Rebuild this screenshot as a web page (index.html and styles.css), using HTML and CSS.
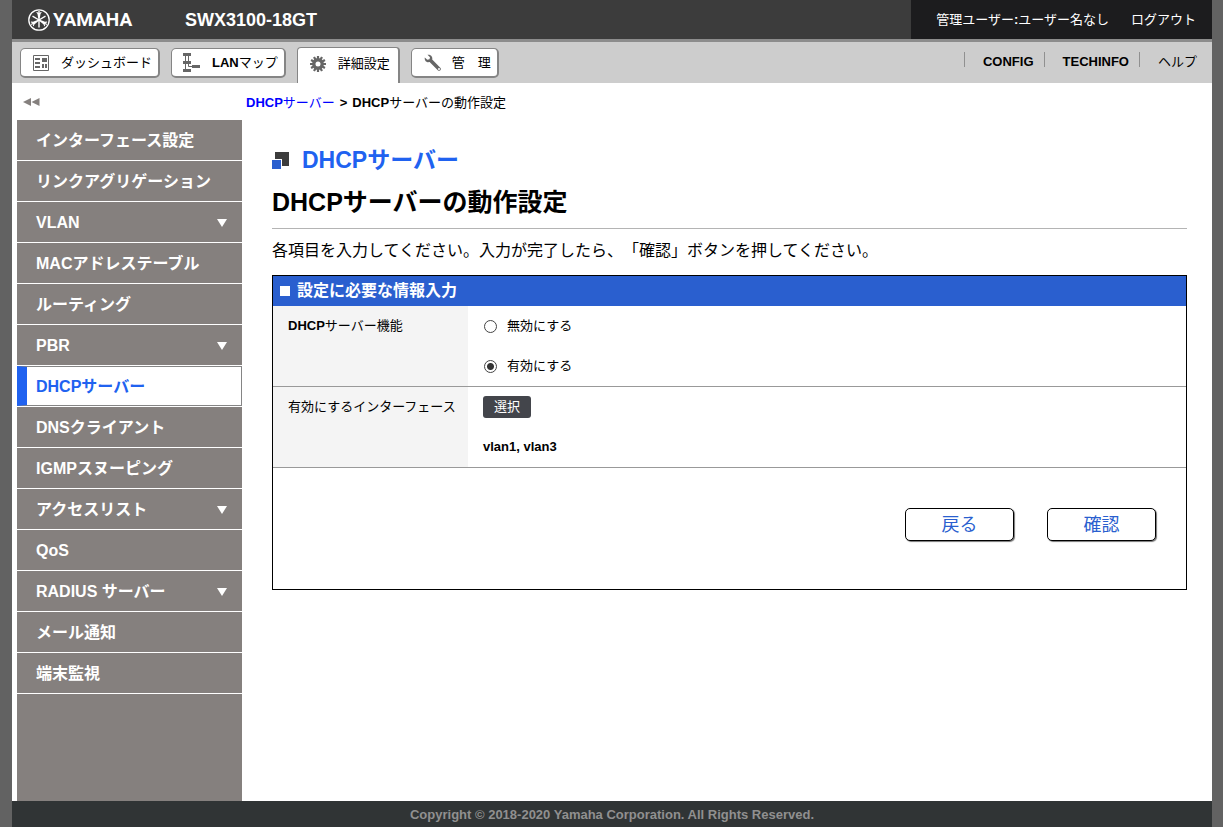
FILE: index.html
```html
<!DOCTYPE html>
<html lang="ja">
<head>
<meta charset="utf-8">
<title>SWX3100-18GT - DHCPサーバー</title>
<link rel="stylesheet" href="styles.css">
</head>
<body>
<div class="page">
  <header class="header">
    <div class="brand">
      <svg class="brand-mark" width="22" height="22" viewBox="0 0 22 22" aria-hidden="true">
        <circle cx="11" cy="11" r="10.2" fill="none" stroke="#fff" stroke-width="1.3"/>
        <path id="fork" d="M10.500 11L9.500 5 8.300 3.300 9 2.700 10.300 4V2h1.400v2L13 2.700l.700.600L12.500 5l-1 6z" fill="#fff"/>
        <use href="#fork" transform="rotate(120 11 11)"/>
        <use href="#fork" transform="rotate(240 11 11)"/>
        <g stroke="#fff" stroke-width="1.400"><path d="M11 11v7.500M11 11L4.500 7.200M11 11l6.500-3.800"/></g>
      </svg>
      <span class="brand-name">YAMAHA</span>
    </div>
    <div class="model">SWX3100-18GT</div>
    <div class="account">
      <span>管理ユーザー<b>:</b>ユーザー名なし</span>
      <a href="#logout">ログアウト</a>
    </div>
  </header>

  <nav class="toolbar" aria-label="メイン">
    <div class="tabs">
      <a class="tab tab-dashboard" href="#dashboard">
        <svg width="16" height="16" viewBox="0 0 16 16" aria-hidden="true"><path d="M.5.500h15v15H.500z" fill="none" stroke="#666"/><path d="M2 3h5v2H2zM2 7h5v2H2zM2 11h5v2H2zM9 3h5v4H9zM9 9h2v4H9zM12 9h2v4h-2z" fill="#666"/></svg>
        <span>ダッシュボード</span>
      </a>
      <a class="tab tab-lan" href="#lanmap">
        <svg width="18" height="20" viewBox="0 0 18 20" aria-hidden="true"><path d="M0 0h8v3H0zM0 8h8v3H0zM0 16h8v3H0zM9 12h8v3H9z" fill="#666"/><path d="M2.500 2v15M5.500 2v11.500H10" fill="none" stroke="#666"/></svg>
        <span><b>LAN</b>マップ</span>
      </a>
      <a class="tab tab-active" href="#detail" aria-current="page">
        <svg width="16" height="16" viewBox="0 0 16 16" aria-hidden="true"><circle cx="8" cy="8" r="4.200" fill="none" stroke="#666" stroke-width="3.400"/><path d="M8 0v3M8 13v3M0 8h3M13 8h3M4 1.070l1.500 2.600M12 14.930l-1.500-2.600M1.070 4l2.600 1.500M14.930 12l-2.600-1.500M1.070 12l2.600-1.500M14.930 4l-2.600 1.500M4 14.930l1.500-2.600M12 1.070l-1.500 2.600" stroke="#666" stroke-width="2.200"/></svg>
        <span>詳細設定</span>
      </a>
      <a class="tab tab-manage" href="#manage">
        <svg width="18" height="18" viewBox="0 0 18 18" aria-hidden="true"><path d="M3.500.800L6 3.200 5.500 5.300 3.300 5.800.800 3.400C.200 6.300 2.300 8.800 5.600 8L13.800 16.200C15.500 17.900 18 15.400 16.300 13.700L8.200 5.500C9 2.500 6.500.100 3.500.800z" fill="#666"/><circle cx="15" cy="15" r="1" fill="#fff"/></svg>
        <span>管　理</span>
      </a>
    </div>
    <div class="links">
      <a href="#config"><b>CONFIG</b></a>
      <a href="#techinfo"><b>TECHINFO</b></a>
      <a href="#help">ヘルプ</a>
    </div>
  </nav>

  <div class="body">
    <aside class="side">
      <button class="collapse" type="button" aria-label="メニューを閉じる">
        <svg width="17" height="8" viewBox="0 0 17 8" aria-hidden="true"><path d="M0 4L8 0v8zM8.500 4l8-4v8z" fill="#85807e"/></svg>
      </button>
      <nav class="menu" aria-label="詳細設定">
        <a href="#m1">インターフェース設定</a>
        <a href="#m2">リンクアグリゲーション</a>
        <a class="has-sub" href="#m3">VLAN</a>
        <a href="#m4">MACアドレステーブル</a>
        <a href="#m5">ルーティング</a>
        <a class="has-sub" href="#m6">PBR</a>
        <a class="current" href="#m7" aria-current="page">DHCPサーバー</a>
        <a href="#m8">DNSクライアント</a>
        <a href="#m9">IGMPスヌーピング</a>
        <a class="has-sub" href="#m10">アクセスリスト</a>
        <a href="#m11">QoS</a>
        <a class="has-sub" href="#m12">RADIUS サーバー</a>
        <a href="#m13">メール通知</a>
        <a href="#m14">端末監視</a>
      </nav>
    </aside>

    <main class="main">
      <div class="crumbs"><a href="#dhcp"><b>DHCP</b>サーバー</a><b class="sep">&gt;</b><span><b>DHCP</b>サーバーの動作設定</span></div>
      <div class="content">
        <h1 class="title">
          <svg width="17" height="17" viewBox="0 0 17 17" aria-hidden="true"><path d="M3 0h14v14H3z" fill="#3c3c3c"/><path d="M0 7h10v10H0z" fill="#fff"/><path d="M0 8h9v9H0z" fill="#2a5fcf"/></svg>
          <span>DHCPサーバー</span>
        </h1>
        <h2 class="subtitle">DHCPサーバーの動作設定</h2>
        <p class="lead">各項目を入力してください。入力が完了したら、「確認」ボタンを押してください。</p>
        <form class="panel">
          <h3 class="panel-title">設定に必要な情報入力</h3>
          <table class="settings">
            <tr>
              <th scope="row"><b>DHCP</b>サーバー機能</th>
              <td>
                <label class="option"><input type="radio" name="dhcp" value="off"><span>無効にする</span></label>
                <label class="option"><input type="radio" name="dhcp" value="on" checked><span>有効にする</span></label>
              </td>
            </tr>
            <tr>
              <th scope="row">有効にするインターフェース</th>
              <td>
                <div class="option"><button class="select" type="button">選択</button></div>
                <div class="option"><b>vlan1, vlan3</b></div>
              </td>
            </tr>
          </table>
          <div class="actions">
            <button class="action" type="button">戻る</button>
            <button class="action" type="button">確認</button>
          </div>
        </form>
      </div>
    </main>
  </div>
  <footer class="footer">Copyright © 2018-2020 Yamaha Corporation. All Rights Reserved.</footer>
</div>
</body>
</html>
```
FILE: styles.css
```css
* { box-sizing: border-box; }
body {
  margin: 0;
  background: #626262;
  color: #000;
  font: 13px/20px "Liberation Sans", "Noto Sans CJK JP", sans-serif;
  text-spacing-trim: space-all;
}
a { color: inherit; text-decoration: none; }
button, input { font: inherit; margin: 0; }
svg { display: block; flex: none; }

.page {
  display: flex;
  flex-direction: column;
  min-height: 100vh;
  margin: 0 11px 0 12px;
  background: #fff;
}

.header {
  display: flex;
  align-items: stretch;
  height: 42px;
  background: #3c3c3c;
  border-bottom: 3px solid #8c8c8c;
  color: #fff;
}
.brand { display: flex; align-items: center; gap: 3px; width: 173px; padding-left: 16px; }
.brand-name { font: bold 19px/39px Roboto, "Liberation Sans", sans-serif; }
.model { font-size: 18px; font-weight: bold; line-height: 41px; }
.account {
  display: flex;
  justify-content: flex-end;
  gap: 22px;
  margin-left: auto;
  padding: 0 16px 0 25px;
  background: #1c1c1e;
  line-height: 40px;
}

.toolbar { display: flex; justify-content: space-between; height: 41px; background: #cdcdcd; }
.tabs { display: flex; align-items: flex-start; gap: 11px; padding: 6px 0 0 8px; }
.tab {
  display: flex;
  align-items: center;
  height: 30px;
  padding: 1px 6px 0 12px;
  background: #fff;
  border: 1px solid #858585;
  border-width: 1px 2px 2px 1px;
  border-radius: 5px;
}
.tab-dashboard { gap: 12px; }
.tab-lan { gap: 11px; padding-left: 11px; }
.tab-active {
  gap: 12px;
  height: 36px;
  margin-top: -1px;
  padding: 0 8px 3px 12px;
  border-width: 1px 2px 0 1px;
  border-radius: 4px 4px 0 0;
}
.tab-manage { gap: 10px; }
.links { display: flex; align-items: flex-start; padding: 10px 15px 0 0; }
.links a { padding: 0 10px 0 18px; border-left: 1px solid #909090; line-height: 19px; height: 15px; }
.links a:last-child { padding: 0 0 0 18px; }

.body { display: flex; flex: 1; }
.side { display: flex; flex-direction: column; width: 230px; padding-left: 5px; flex: none; }
.collapse { height: 37px; padding: 0 6px; border: 0; background: none; cursor: pointer; }
.menu { flex: 1; background: #85807e; color: #fff; font-size: 16px; font-weight: bold; }
.menu a {
  display: flex;
  align-items: center;
  justify-content: space-between;
  height: 41px;
  padding: 2px 15px 0 19px;
  border-bottom: 1px solid #fff;
}
.has-sub::after {
  content: "";
  border: solid transparent;
  border-width: 8px 5px 0;
  border-top-color: #fff;
}
.menu .current {
  position: relative;
  height: 40px;
  margin-bottom: 1px;
  padding-left: 9px;
  background: #fff;
  border: solid #858585;
  border-width: 1px 1px 1px 10px;
  border-left-color: #2062f0;
  color: #2062f0;
}
.menu .current::after {
  content: "";
  position: absolute;
  left: -10px;
  right: -1px;
  bottom: -2px;
  height: 1px;
  background: #fff;
}

.main { flex: 1; padding: 10px 25px 0 4px; }
.crumbs a { color: #00f; }
.sep { margin: 0 5px; }
.content { padding: 35px 0 0 26px; }
.title {
  display: flex;
  align-items: center;
  gap: 13px;
  margin: 0;
  color: #2062f0;
  font-size: 23px;
  line-height: 24px;
}
.subtitle {
  margin: 0;
  padding: 15px 0 11px;
  border-bottom: 1px solid #b4b4b4;
  font-size: 25px;
  line-height: 30px;
}
.lead { margin: 0; padding: 10px 0 12px; font-size: 16px; line-height: 24px; }

.panel { border: 1px solid #000; }
.panel-title {
  display: flex;
  align-items: center;
  gap: 7px;
  margin: 0;
  padding-left: 7px;
  background: #2a5fcf;
  color: #fff;
  font-size: 16px;
  line-height: 30px;
}
.panel-title::before { content: ""; width: 10px; height: 10px; background: #fff; }
.settings { width: 100%; border-collapse: collapse; }
.settings th, .settings td { padding: 0 10px 0 15px; border-bottom: 1px solid #999; }
.settings th {
  width: 195px;
  background: #f4f4f4;
  font-weight: normal;
  line-height: 40px;
  text-align: left;
  vertical-align: top;
  white-space: nowrap;
}
.option { display: flex; align-items: center; gap: 10px; height: 40px; }
.option input {
  appearance: none;
  width: 13px;
  height: 13px;
  margin-left: 1px;
  border: 1px solid #444;
  border-radius: 50%;
  background: #fff;
}
.option input:checked { background: radial-gradient(circle, #333 0 3px, #fff 4px); }
.select {
  height: 22px;
  padding: 0 11px;
  border: 0;
  border-radius: 3px;
  background: #43454b;
  color: #fff;
}
.actions { display: flex; justify-content: flex-end; gap: 33px; padding: 40px 30px 48px; }
.action {
  width: 109px;
  height: 33px;
  padding: 0;
  background: #fff;
  border: 1px solid #000;
  border-radius: 5px;
  box-shadow: 1px 1px 1px #777;
  color: #2a5fcf;
  font-size: 18px;
}

.footer {
  height: 26px;
  background: #303435;
  color: #909090;
  font-weight: bold;
  line-height: 27px;
  text-align: center;
}
```
